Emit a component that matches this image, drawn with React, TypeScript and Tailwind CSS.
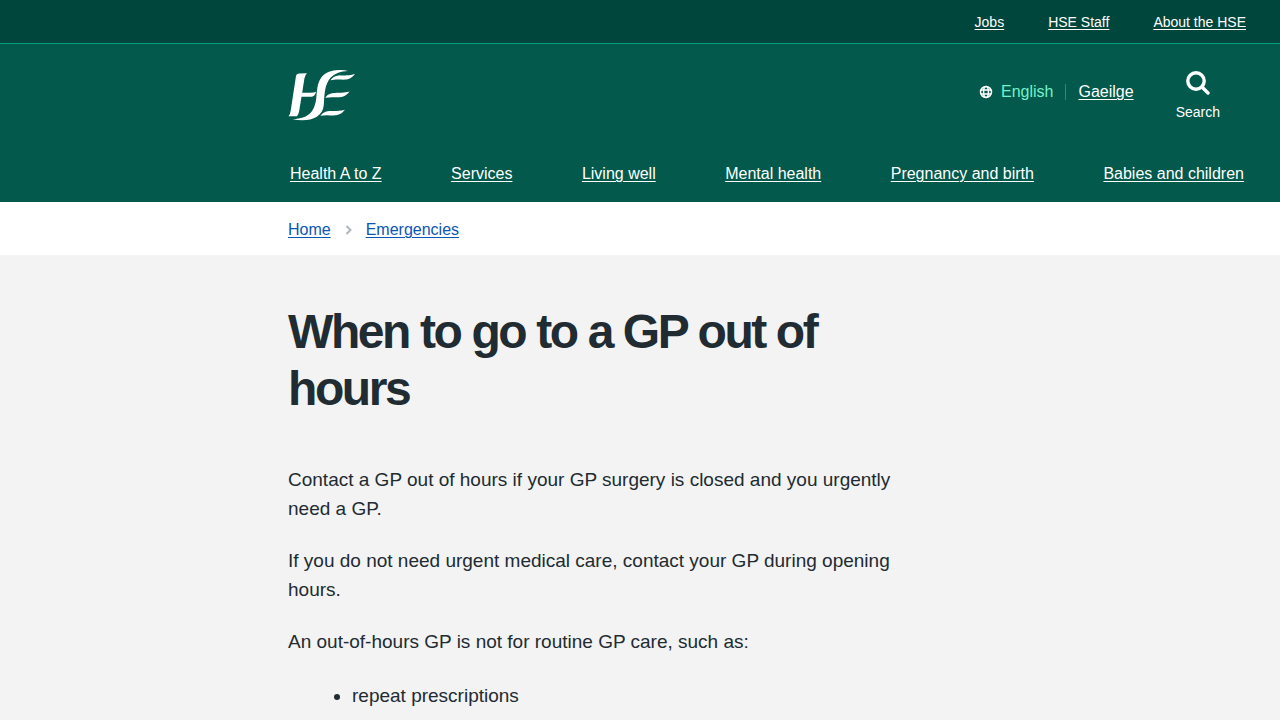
import React from 'react';

const utilityLinks = ['Jobs', 'HSE Staff', 'About the HSE'];

const navLinks = [
  'Health A to Z',
  'Services',
  'Living well',
  'Mental health',
  'Pregnancy and birth',
  'Babies and children',
];

const Logo = () => (
  <svg width="68" height="52" viewBox="0 0 68 52" fill="#fff" aria-hidden="true">
    <path d="M8 6 Q8.2 3.6 11 3.4 L19 3.2 Q17 4.8 16.4 8.5 L14.2 22.8 H22 Q26 22.8 28 21.8 Q27.4 25.8 24 26.8 H13.5 L11.2 41 Q10.4 45 9 46.2 H0.5 Q2.2 44.5 2.8 40 Z" />
    <path d="M60 1 Q50 -1.4 41 1.8 C29.5 6.5 29.5 17 28.4 27 C27 40 22.5 48.6 4.5 49.2 C19 52.4 34.6 49 35.8 35 C36.6 24 36.5 15 42.5 7.8 Q49 1.2 60 1 Z" />
    <path d="M42.5 10.2 C48 2.6 55 7.4 67 4 C59 13.4 54 7.6 42.5 10.2 Z" />
    <path d="M37.2 27.8 C43 20 50 24.8 61.6 21.6 C54 31 48.5 25.4 37.2 27.8 Z" />
    <path d="M32.4 45.8 C38.5 38 45.5 43 57 39.8 C49 49.2 43.5 43.4 32.4 45.8 Z" />
  </svg>
);

const Globe = () => (
  <svg width="14" height="14" viewBox="0 0 14 14" fill="none" stroke="#fff" strokeWidth="1.5" aria-hidden="true">
    <circle cx="7" cy="7" r="5.5" />
    <ellipse cx="7" cy="7" rx="2.4" ry="5.5" />
    <path d="M1.8 5h10.4M1.8 9h10.4" />
  </svg>
);

const SearchIcon = () => (
  <svg width="24" height="24" viewBox="0 0 24 24" fill="none" stroke="#fff" strokeWidth="3.4" strokeLinecap="round" aria-hidden="true">
    <circle cx="10" cy="10" r="8.2" />
    <path d="M16.2 16.2l5.8 5.8" />
  </svg>
);

const App = () => {
  return (
    <div className="min-h-screen bg-[#f3f3f3] font-['Liberation_Sans',Arial,sans-serif] text-[#212b32]">
      <header className="bg-[#02594c] text-white">
        <div className="flex justify-end gap-11 border-b border-[#00a17e] bg-[#00463c] pt-3 pr-[34px] pb-[11px] text-sm">
          {utilityLinks.map((label) => (
            <a key={label} href="#" className="underline decoration-1 underline-offset-2">
              {label}
            </a>
          ))}
        </div>

        <div className="flex items-start justify-between pt-[26px] pr-15 pl-72">
          <a href="#" aria-label="HSE home">
            <Logo />
          </a>
          <div className="flex items-start">
            <div className="mt-[10px] flex items-center">
              <Globe />
              <span className="ml-2 text-base text-[#73f2c9]">English</span>
              <span className="mx-3 h-4 w-px bg-[#00a17e]"></span>
              <a href="#" className="text-base underline decoration-1 underline-offset-2">
                Gaeilge
              </a>
            </div>
            <button type="button" className="mt-px ml-[42px] flex flex-col items-center gap-[7px] text-sm">
              <SearchIcon />
              Search
            </button>
          </div>
        </div>

        <nav aria-label="Main" className="flex justify-between pt-10 pr-9 pb-4 pl-[290px] text-base">
          {navLinks.map((label) => (
            <a key={label} href="#" className="underline decoration-1 underline-offset-2">
              {label}
            </a>
          ))}
        </nav>
      </header>

      <nav aria-label="Breadcrumb" className="flex items-center bg-white pt-4 pb-[13px] pl-72 text-base text-[#0b55b7]">
        <a href="#" className="underline decoration-1 underline-offset-2">
          Home
        </a>
        <svg className="mx-3.5" width="7" height="10" viewBox="0 0 7 10" fill="none" stroke="#aeb7bd" strokeWidth="2" aria-hidden="true">
          <path d="M1.5 1l4 4-4 4" />
        </svg>
        <a href="#" className="underline decoration-1 underline-offset-2">
          Emergencies
        </a>
      </nav>

      <main className="max-w-[896px] pt-12 pl-72">
        <h1 className="mb-12 text-5xl leading-[57px] font-bold tracking-tighter">
          When to go to a GP out of hours
        </h1>
        <div className="space-y-[23px] text-[19px] leading-[29px]">
          <p>Contact a GP out of hours if your GP surgery is closed and you urgently need a GP.</p>
          <p>If you do not need urgent medical care, contact your GP during opening hours.</p>
          <p>An out-of-hours GP is not for routine GP care, such as:</p>
          <ul className="list-disc pt-0.5 pl-16">
            <li>repeat prescriptions</li>
          </ul>
        </div>
      </main>
    </div>
  );
};

export default App;
